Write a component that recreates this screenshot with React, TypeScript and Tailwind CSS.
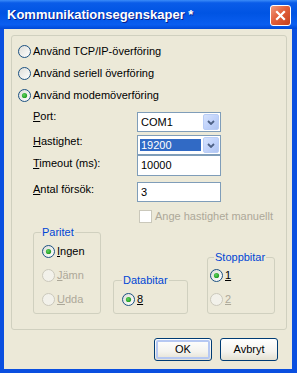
import React from "react";

function Radio({ checked = false, disabled = false }: { checked?: boolean; disabled?: boolean }) {
  return (
    <svg width="13" height="13" viewBox="0 0 13 13" className="shrink-0">
      <defs>
        <linearGradient id="radioFill" x1="0" y1="0" x2="1" y2="1">
          <stop offset="0" stopColor="#dcdcd7" />
          <stop offset="1" stopColor="#ffffff" />
        </linearGradient>
        <radialGradient id="radioDot" cx="0.4" cy="0.4" r="0.6">
          <stop offset="0" stopColor="#5fd35f" />
          <stop offset="1" stopColor="#219b21" />
        </radialGradient>
      </defs>
      <circle
        cx="6.5"
        cy="6.5"
        r="6"
        fill={disabled ? "#f2f1ea" : "url(#radioFill)"}
        stroke={disabled ? "#cac8bb" : "#1c5180"}
        strokeWidth="1"
      />
      {checked && <circle cx="6.5" cy="6.5" r="2.6" fill="url(#radioDot)" />}
    </svg>
  );
}

function RadioRow({ label, checked, disabled }: { label: React.ReactNode; checked?: boolean; disabled?: boolean }) {
  return (
    <div className="flex items-center gap-[2px] h-[13px]">
      <Radio checked={checked} disabled={disabled} />
      <span className={disabled ? "text-[#aca899]" : ""}>{label}</span>
    </div>
  );
}

function Chevron() {
  return (
    <svg width="8" height="5" viewBox="0 0 8 5">
      <path d="M1 1 L4 4 L7 1" fill="none" stroke="#4d6185" strokeWidth="1.8" />
    </svg>
  );
}

function Combo({ value, selected = false }: { value: string; selected?: boolean }) {
  return (
    <div className="w-[84px] h-[20px] border border-[#7f9db9] bg-white flex items-center">
      {selected ? (
        <div className="flex-1 ml-[2px] mr-[2px] h-[12px] flex items-center bg-[#316ac5] text-white pl-[1px]">{value}</div>
      ) : (
        <div className="flex-1 pl-[3px]">{value}</div>
      )}
      <div className="w-[16px] h-[16px] mr-[1px] rounded-[2px] border border-[#b9cdf6] bg-[linear-gradient(135deg,#d6e3fd_0%,#c1d3fb_50%,#afc4f1_100%)] flex items-center justify-center">
        <Chevron />
      </div>
    </div>
  );
}

function Box({ value, tall = false }: { value: string; tall?: boolean }) {
  return (
    <div className={`w-[84px] ${tall ? "h-[21px]" : "h-[20px]"} border border-[#7f9db9] bg-white flex items-center pl-[3px]`}>
      {value}
    </div>
  );
}

function Button({ label, isDefault = false }: { label: string; isDefault?: boolean }) {
  return (
    <div className="w-[58px] h-[23px] rounded-[3px] border border-[#003c74] bg-[linear-gradient(to_bottom,#ffffff_0%,#f4f3ee_60%,#e3e0d2_100%)] p-[1px]">
      <div
        className={`w-full h-full rounded-[2px] flex items-center justify-center ${
          isDefault ? "border-2 border-[#b6c8f2]" : ""
        }`}
      >
        {label}
      </div>
    </div>
  );
}

function Group({ title, width, legendMl = "ml-[7px]", pad = "pl-[8px]", gapTop = "pt-[6px]", children }: {
  title: string;
  width: string;
  legendMl?: string;
  pad?: string;
  gapTop?: string;
  children: React.ReactNode;
}) {
  return (
    <fieldset className={`${width} border border-[#d0d0bf] rounded-[3px] pb-[7px] px-0`}>
      <legend className={`${legendMl} px-[1px] text-[#0046d5] leading-[13px]`}>{title}</legend>
      <div className={`flex flex-col gap-[11px] ${gapTop} ${pad}`}>{children}</div>
    </fieldset>
  );
}

export default function App() {
  return (
    <div className="w-[297px] h-[373px] flex flex-col bg-[#0a4fe0] font-['Liberation_Sans',Arial,sans-serif] text-[11px] leading-[13px] text-black">
      {/* Title bar */}
      <div className="h-[29px] shrink-0 flex items-center pl-[7px] pr-[6px] bg-[linear-gradient(to_bottom,#3b8cf8_0%,#0a5ce8_10%,#0054e3_45%,#0a5ef0_85%,#0049d8_100%)]">
        <span className="flex-1 text-white font-bold text-[13px] leading-[16px] [text-shadow:1px_1px_0_#0a1d8a]">
          Kommunikationsegenskaper *
        </span>
        <div className="w-[21px] h-[21px] mt-[1px] rounded-[3px] border border-white bg-[linear-gradient(135deg,#f09a7e_0%,#e2603b_45%,#c6401b_100%)] flex items-center justify-center">
          <svg width="11" height="11" viewBox="0 0 11 11">
            <path d="M2 2 L9 9 M9 2 L2 9" stroke="#ffffff" strokeWidth="2.2" strokeLinecap="square" />
          </svg>
        </div>
      </div>

      {/* Client area */}
      <div className="flex-1 ml-[4px] mr-[5px] mb-[4px] bg-[#ece9d8] flex flex-col">
        <div className="ml-[7px] mt-[6px] w-[276px] h-[295px] shrink-0 border border-[#d0d0bf] rounded-[3px] flex flex-col">
          <div className="flex flex-col gap-[9px] pl-[6px] pt-[9px]">
            <RadioRow label="Använd TCP/IP-överföring" />
            <RadioRow label="Använd seriell överföring" />
            <RadioRow label="Använd modemöverföring" checked />
          </div>

          <div className="flex flex-col pl-[21px] mt-[8px]">
            <div className="flex h-[22px]">
              <div className="w-[104px]">
                <u>P</u>ort:
              </div>
              <div className="mt-[2px]">
                <Combo value="COM1" />
              </div>
            </div>
            <div className="flex mt-[3px]">
              <div className="w-[104px]">
                <u>H</u>astighet:
              </div>
              <Combo value="19200" selected />
            </div>
            <div className="flex">
              <div className="w-[104px] pt-[2px]">
                <u>T</u>imeout (ms):
              </div>
              <Box value="10000" tall />
            </div>
            <div className="flex mt-[6px]">
              <div className="w-[104px] pt-[1px]">
                <u>A</u>ntal försök:
              </div>
              <Box value="3" />
            </div>
            <div className="flex items-center gap-[3px] pl-[106px] mt-[8px] h-[13px]">
              <div className="w-[13px] h-[13px] border border-[#cac8bb] bg-white shrink-0" />
              <span className="text-[#aca899]">Ange hastighet manuellt</span>
            </div>

            <div className="flex items-end mt-[3px]">
              <Group title="Paritet" width="w-[68px]">
                <RadioRow label={<><u>I</u>ngen</>} checked />
                <RadioRow label={<><u>J</u>ämn</>} disabled />
                <RadioRow label={<><u>U</u>dda</>} disabled />
              </Group>
              <div className="ml-[12px]">
                <Group title="Databitar" width="w-[75px]" legendMl="ml-[8px]">
                  <RadioRow label={<u>8</u>} checked />
                </Group>
              </div>
              <div className="ml-[19px]">
                <Group title="Stoppbitar" width="w-[68px]" legendMl="ml-[6px]" pad="pl-[2px]" gapTop="pt-[5px]">
                  <RadioRow label={<u>1</u>} checked />
                  <RadioRow label={<u>2</u>} disabled />
                </Group>
              </div>
            </div>
          </div>
        </div>

        <div className="flex justify-end gap-[8px] mt-[8px] mr-[14px]">
          <Button label="OK" isDefault />
          <Button label="Avbryt" />
        </div>
      </div>
    </div>
  );
}
